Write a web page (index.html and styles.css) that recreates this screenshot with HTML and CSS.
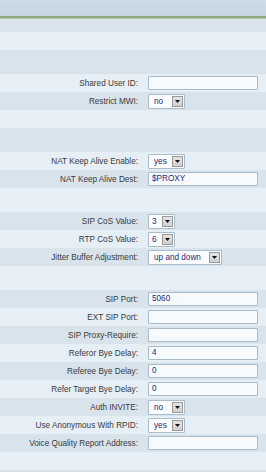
FILE: index.html
```html
<!DOCTYPE html>
<html lang="en">
<head>
  <meta charset="UTF-8">
  <title>SIP Settings</title>
  <link rel="stylesheet" href="styles.css">
</head>
<body>

  <div class="topbar"></div>
  <div class="rule"></div>

  <div class="form">
    <div class="row band dark"></div>
    <div class="row light"></div>
    <div class="row section dark"></div>

    <div class="row light">
      <label>Shared User ID:</label>
      <div class="field"><span class="input"></span></div>
    </div>
    <div class="row dark">
      <label>Restrict MWI:</label>
      <div class="field">
        <div class="select w-yn"><span class="val">no</span><span class="arrow"><svg width="5" height="3" viewBox="0 0 5 3"><path d="M0 0h5L2.5 3z" fill="#111"/></svg></span></div>
      </div>
    </div>
    <div class="row light"></div>
    <div class="row section dark"></div>

    <div class="row light">
      <label>NAT Keep Alive Enable:</label>
      <div class="field">
        <div class="select w-yn"><span class="val">yes</span><span class="arrow"><svg width="5" height="3" viewBox="0 0 5 3"><path d="M0 0h5L2.5 3z" fill="#111"/></svg></span></div>
      </div>
    </div>
    <div class="row dark">
      <label>NAT Keep Alive Dest:</label>
      <div class="field"><span class="input">$PROXY</span></div>
    </div>
    <div class="row section light"></div>

    <div class="row dark">
      <label>SIP CoS Value:</label>
      <div class="field">
        <div class="select w-num"><span class="val">3</span><span class="arrow"><svg width="5" height="3" viewBox="0 0 5 3"><path d="M0 0h5L2.5 3z" fill="#111"/></svg></span></div>
      </div>
    </div>
    <div class="row light">
      <label>RTP CoS Value:</label>
      <div class="field">
        <div class="select w-num"><span class="val">6</span><span class="arrow"><svg width="5" height="3" viewBox="0 0 5 3"><path d="M0 0h5L2.5 3z" fill="#111"/></svg></span></div>
      </div>
    </div>
    <div class="row dark">
      <label>Jitter Buffer Adjustment:</label>
      <div class="field">
        <div class="select w-wide"><span class="val">up and down</span><span class="arrow"><svg width="5" height="3" viewBox="0 0 5 3"><path d="M0 0h5L2.5 3z" fill="#111"/></svg></span></div>
      </div>
    </div>
    <div class="row section light"></div>

    <div class="row dark">
      <label>SIP Port:</label>
      <div class="field"><span class="input">5060</span></div>
    </div>
    <div class="row light">
      <label>EXT SIP Port:</label>
      <div class="field"><span class="input"></span></div>
    </div>
    <div class="row dark">
      <label>SIP Proxy-Require:</label>
      <div class="field"><span class="input"></span></div>
    </div>
    <div class="row light">
      <label>Referor Bye Delay:</label>
      <div class="field"><span class="input">4</span></div>
    </div>
    <div class="row dark">
      <label>Referee Bye Delay:</label>
      <div class="field"><span class="input">0</span></div>
    </div>
    <div class="row light">
      <label>Refer Target Bye Delay:</label>
      <div class="field"><span class="input">0</span></div>
    </div>
    <div class="row dark">
      <label>Auth INVITE:</label>
      <div class="field">
        <div class="select w-yn"><span class="val">no</span><span class="arrow"><svg width="5" height="3" viewBox="0 0 5 3"><path d="M0 0h5L2.5 3z" fill="#111"/></svg></span></div>
      </div>
    </div>
    <div class="row light">
      <label>Use Anonymous With RPID:</label>
      <div class="field">
        <div class="select w-yn"><span class="val">yes</span><span class="arrow"><svg width="5" height="3" viewBox="0 0 5 3"><path d="M0 0h5L2.5 3z" fill="#111"/></svg></span></div>
      </div>
    </div>
    <div class="row dark">
      <label>Voice Quality Report Address:</label>
      <div class="field"><span class="input"></span></div>
    </div>
    <div class="row light"></div>
    <div class="row dark"></div>
  </div>

</body>
</html>
```

FILE: styles.css
```css
:root {
  --row-light: #e6eef6;
  --row-dark: #d9e3ec;
  --label: #3a3a3a;
  --value: #2a2a78;
  --field-border: #a9bccb;
}

* {
  box-sizing: border-box;
}

body {
  margin: 0;
  background: var(--row-light);
  font-family: "Liberation Sans", Arial, sans-serif;
  font-size: 8.2px;
  color: var(--label);
}

.topbar {
  height: 16px;
  background: linear-gradient(180deg, #cddbe6, #c4d5e2);
}

.rule {
  height: 2px;
  background: #8ea97f;
  border-bottom: 1px solid #b9cbb4;
  height: 3px;
}

.row {
  display: grid;
  grid-template-columns: 138px 110px;
  column-gap: 10px;
  align-items: center;
  height: 18px;
}

.row.band {
  height: 13px;
}

.row.section {
  height: 24px;
}

.light {
  background: var(--row-light);
}

.dark {
  background: var(--row-dark);
}

.row label {
  text-align: right;
  white-space: nowrap;
}

.field {
  display: flex;
  align-items: center;
}

.input {
  display: block;
  width: 110px;
  height: 14px;
  line-height: 12px;
  padding-left: 3px;
  background: #f7fafc;
  border: 1px solid var(--field-border);
  border-radius: 1px;
  color: var(--value);
}

.select {
  display: flex;
  align-items: center;
  height: 15px;
  background: #fafcfd;
  border: 1px solid var(--field-border);
  border-radius: 1px;
  color: var(--value);
}

.select .val {
  flex: 1;
  padding-left: 5px;
  white-space: nowrap;
}

.select .arrow {
  display: flex;
  align-items: center;
  justify-content: center;
  width: 11px;
  height: 11px;
  margin-right: 1px;
  background: linear-gradient(180deg, #e4e4e4, #cfcfcf);
  border: 1px solid #9a9a9a;
}

.w-yn {
  width: 37px;
}

.w-num {
  width: 27px;
}

.w-num .val {
  padding-left: 3px;
}

.w-wide {
  width: 74px;
}
```
